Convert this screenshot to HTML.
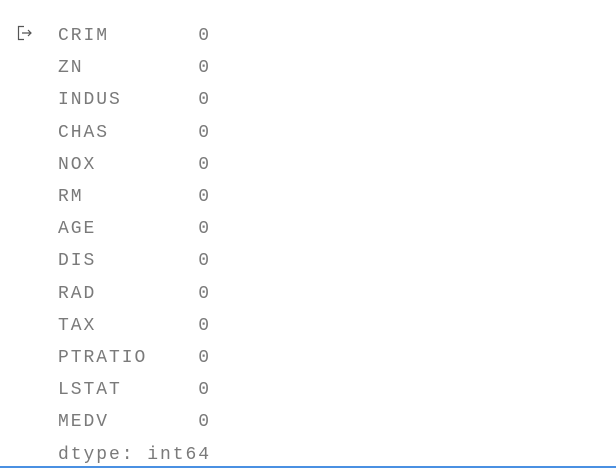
<!DOCTYPE html>
<html><head><style>
html,body{margin:0;padding:0;background:#fff;width:616px;height:469px;overflow:hidden;position:relative}
pre{position:absolute;left:58px;top:20px;margin:0;font-family:"Liberation Mono",monospace;font-size:18px;line-height:32.2px;color:#7a7a7a;letter-spacing:1.95px}
.line{position:absolute;left:0;top:466px;width:616px;height:2px;background:#4a90e2}
svg{position:absolute;left:17px;top:25px}
</style></head><body>
<svg width="18" height="16" viewBox="0 0 18 16"><path d="M7 1.5H1.5V14.5H7" fill="none" stroke="#555" stroke-width="1.2"/><path d="M5 8H14M11 5L14 8L11 11" fill="none" stroke="#555" stroke-width="1.2"/></svg>
<pre>CRIM       0
ZN         0
INDUS      0
CHAS       0
NOX        0
RM         0
AGE        0
DIS        0
RAD        0
TAX        0
PTRATIO    0
LSTAT      0
MEDV       0
dtype: int64</pre>
<div class="line"></div>
</body></html>
